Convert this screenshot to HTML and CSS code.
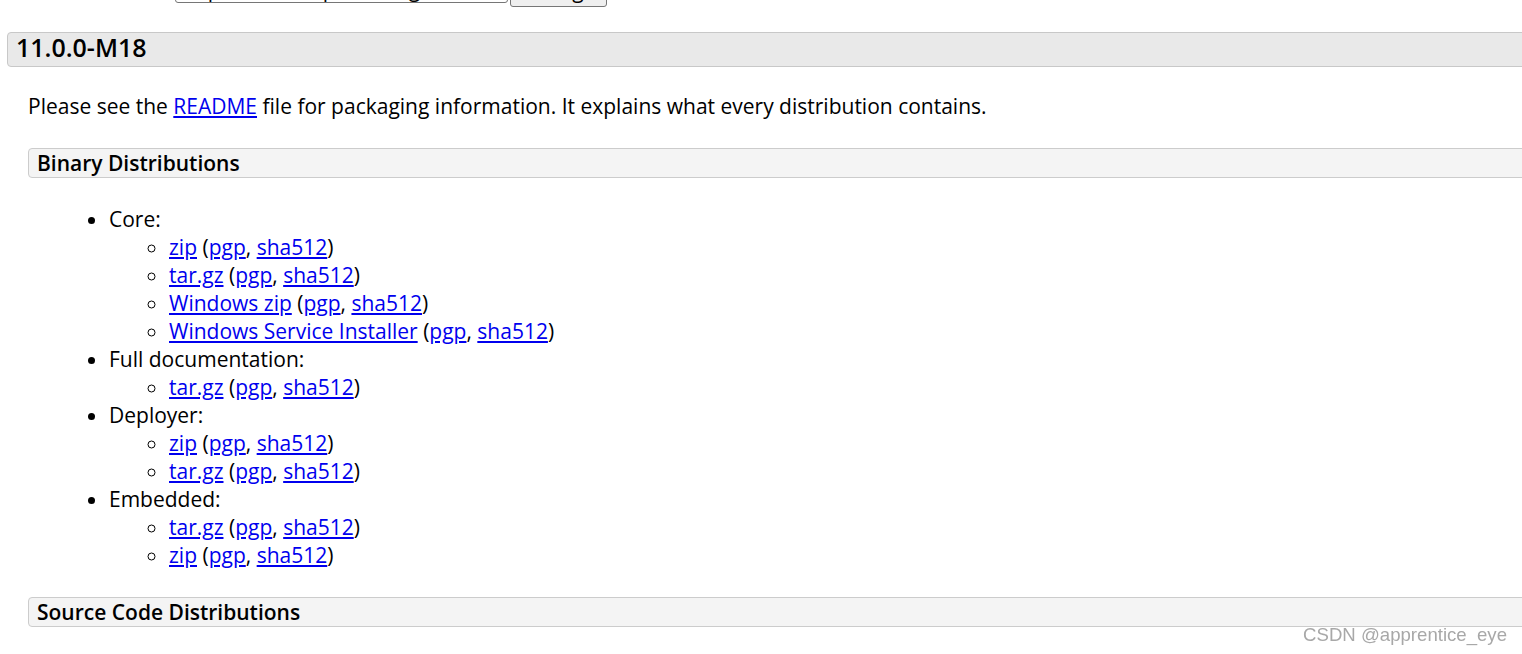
FILE: index.html
```html
<!DOCTYPE html>
<html lang="en">
<head>
    <meta charset="UTF-8">
    <title>Apache Tomcat 11 Downloads</title>
    <link rel="stylesheet" href="styles.css">
</head>
<body>
<div class="page">
    <form class="mirror">
        <select class="mirror-select" name="Preferred">
            <option>https://dlcdn.apache.org/</option>
        </select>
        <button class="mirror-button" type="button">Change</button>
    </form>

    <h3 class="release" id="11.0.0-M18">11.0.0-M18</h3>
    <div class="release-body">
        <p class="readme">Please see the <a href="#">README</a> file for packaging information. It explains what every distribution contains.</p>

        <h4 class="dist-title">Binary Distributions</h4>
        <ul class="dist-list">
            <li>Core:
                <ul>
                    <li><a href="#">zip</a> (<a href="#">pgp</a>, <a href="#">sha512</a>)</li>
                    <li><a href="#">tar.gz</a> (<a href="#">pgp</a>, <a href="#">sha512</a>)</li>
                    <li><a href="#">Windows zip</a> (<a href="#">pgp</a>, <a href="#">sha512</a>)</li>
                    <li><a href="#">Windows Service Installer</a> (<a href="#">pgp</a>, <a href="#">sha512</a>)</li>
                </ul>
            </li>
            <li>Full documentation:
                <ul>
                    <li><a href="#">tar.gz</a> (<a href="#">pgp</a>, <a href="#">sha512</a>)</li>
                </ul>
            </li>
            <li>Deployer:
                <ul>
                    <li><a href="#">zip</a> (<a href="#">pgp</a>, <a href="#">sha512</a>)</li>
                    <li><a href="#">tar.gz</a> (<a href="#">pgp</a>, <a href="#">sha512</a>)</li>
                </ul>
            </li>
            <li>Embedded:
                <ul>
                    <li><a href="#">tar.gz</a> (<a href="#">pgp</a>, <a href="#">sha512</a>)</li>
                    <li><a href="#">zip</a> (<a href="#">pgp</a>, <a href="#">sha512</a>)</li>
                </ul>
            </li>
        </ul>

        <h4 class="dist-title">Source Code Distributions</h4>
    </div>
</div>
<div class="watermark">CSDN @apprentice_eye</div>
</body>
</html>
```

FILE: styles.css
```css
html, body {
    overflow: hidden;
}

body {
    margin: 0;
    font-family: "Open Sans", "Noto Sans", sans-serif;
    font-size: 21px;
    line-height: 28px;
    color: #000;
    background-color: #fff;
}

a {
    color: #0000ee;
}

.page {
    padding-left: 7px;
    margin-right: -20px;
}

.mirror {
    display: flex;
    align-items: flex-start;
    gap: 2px;
    margin: -27px 0 0 168px;
    height: 34px;
}

.mirror-select {
    width: 333px;
    height: 30px;
    font-family: "Open Sans", sans-serif;
    font-size: 21px;
    border: 1px solid #767676;
    border-radius: 3px;
    background-color: #fff;
}

.mirror-button {
    width: 97px;
    height: 34px;
    font-family: "Open Sans", sans-serif;
    font-size: 21px;
    border: 1px solid #767676;
    border-radius: 3px;
    background-color: #efefef;
}

.release {
    margin: 25px 0 0;
    padding: 0 8px 4px;
    font-size: 25px;
    font-weight: 600;
    line-height: 29px;
    background-color: #e9e9e9;
    border: 1px solid #c8c8c8;
    border-radius: 4px;
}

.release-body {
    padding-left: 21px;
}

.readme {
    margin: 25px 0 0;
}

.dist-title {
    margin: 28px 0 0;
    padding: 0 8px;
    font-size: 21px;
    font-weight: 600;
    line-height: 28px;
    background-color: #f4f4f4;
    border: 1px solid #cccccc;
    border-radius: 4px;
}

.dist-list {
    margin: 27px 0 25px;
    padding-left: 81px;
}

.dist-list ul {
    margin: 0;
    padding-left: 60px;
}

.watermark {
    position: fixed;
    right: 15px;
    bottom: 9px;
    font-family: "Liberation Sans", Arial, sans-serif;
    font-size: 18.6px;
    line-height: 20px;
    color: #a8a8a8;
}
```
